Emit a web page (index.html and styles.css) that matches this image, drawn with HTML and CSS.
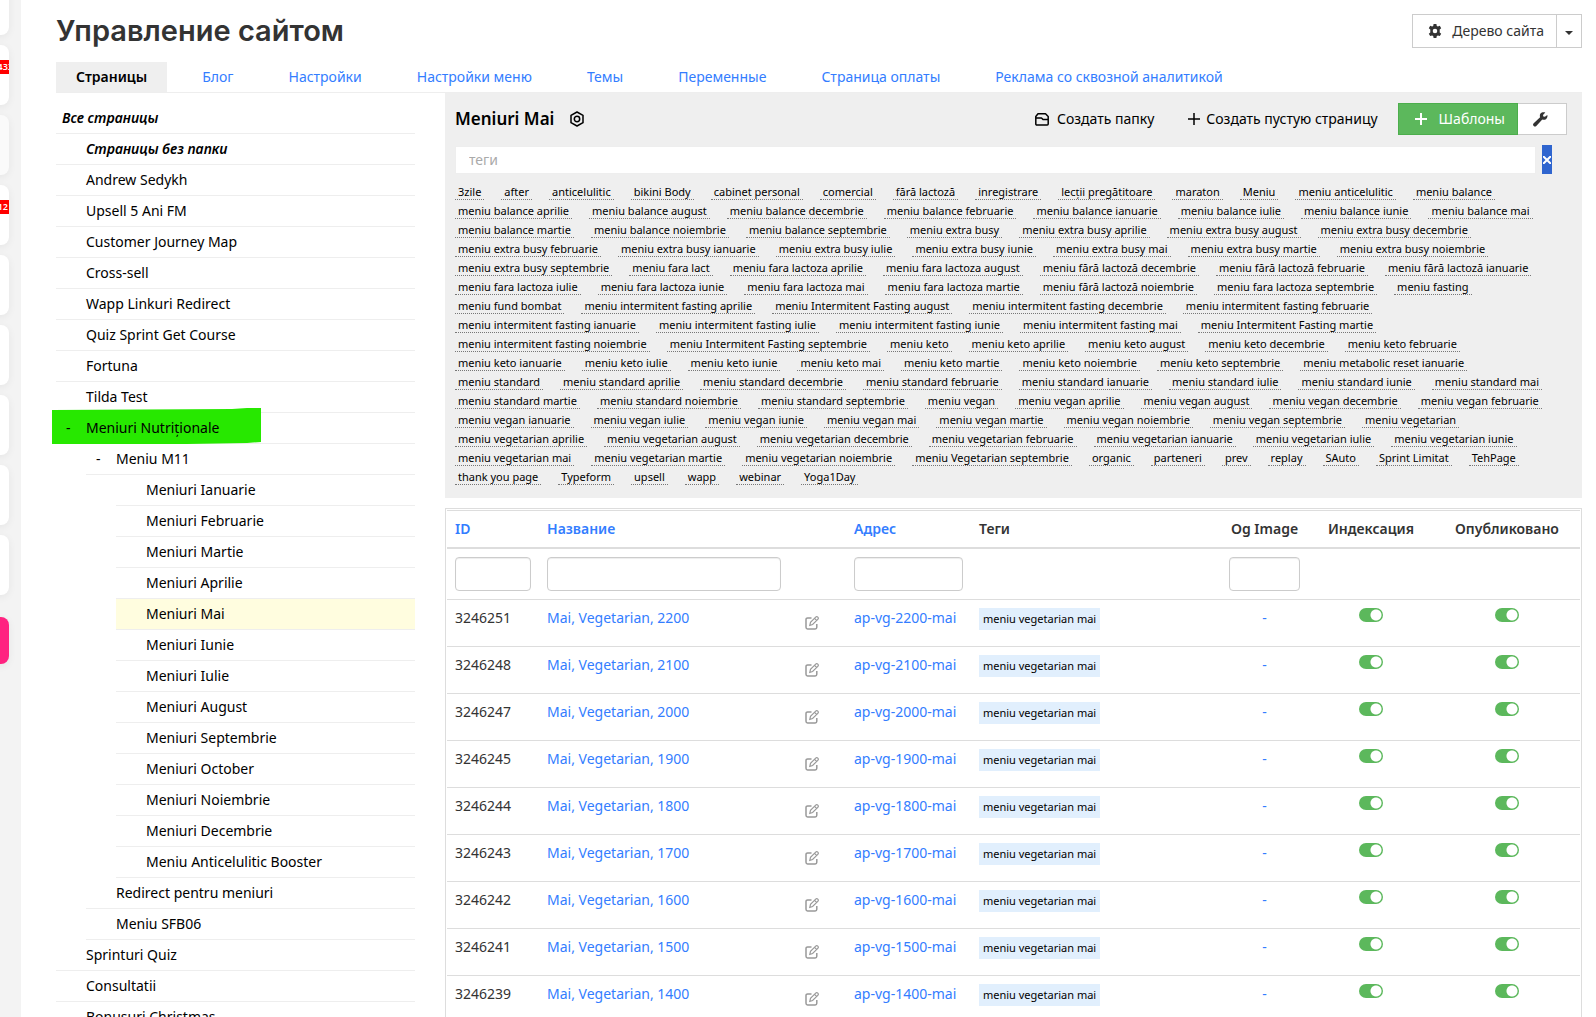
FILE: index.html
```html
<!DOCTYPE html>
<html lang="ru">
<head>
  <meta charset="UTF-8">
  <meta name="viewport" content="width=device-width, initial-scale=1.0">
  <title>Управление сайтом</title>
  <link rel="stylesheet" href="styles.css">
</head>
<body>

<!-- icons -->
<svg class="sprite" aria-hidden="true">
  <symbol id="i-edit" viewBox="0 0 14 14">
    <path d="M6.5 1.9H2.6A1.6 1.6 0 0 0 1 3.500v7.800a1.600 1.600 0 0 0 1.600 1.600h7.600a1.600 1.600 0 0 0 1.600-1.600V8" fill="none" stroke="currentColor" stroke-width="1.500"/>
    <path d="M4.800 9.300l.7-2.900 5.200-5.200a1.400 1.400 0 0 1 2.100 2.100L7.600 8.500z M9.600 2.400l2 2" fill="none" stroke="currentColor" stroke-width="1.200"/>
  </symbol>
  <symbol id="i-plus" viewBox="0 0 12 12">
    <path d="M6 0v12M0 6h12" fill="none" stroke="currentColor" stroke-width="1.500"/>
  </symbol>
</svg>

<div class="page">

  <nav class="rail" aria-label="Меню">
    <a class="rail-item" href="#"></a>
    <a class="rail-item" href="#"><span class="badge">433</span></a>
    <a class="rail-item faded" href="#"></a>
    <a class="rail-item" href="#"><span class="badge badge-short">12</span></a>
    <a class="rail-item" href="#"></a>
    <a class="rail-item" href="#"></a>
    <a class="rail-item" href="#"></a>
    <a class="rail-item" href="#"></a>
    <a class="rail-item" href="#"></a>
    <a class="rail-item pink" href="#"></a>
  </nav>

  <div class="content">

    <header class="page-header">
      <h1>Управление сайтом</h1>
      <div class="btn-group">
        <button class="btn btn-tree" type="button">
          <svg width="14" height="14" viewBox="0 0 14 14"><path fill="currentColor" fill-rule="evenodd" d="M5.600 0h2.800l.4 1.900 1.100.6 1.900-.7 1.400 2.400-1.500 1.300v2.900l1.500 1.300-1.400 2.400-1.900-.7-1.100.7L8.400 14H5.600l-.4-2-1.100-.6-1.900.7L.8 9.700l1.500-1.300V5.600L.8 4.200l1.400-2.400 1.900.7 1.100-.6zM7 4.700a2.300 2.300 0 1 0 0 4.600 2.300 2.300 0 0 0 0-4.600z"/></svg>
          Дерево сайта
        </button>
        <button class="btn btn-caret" type="button" aria-label="Ещё"><span class="caret"></span></button>
      </div>
    </header>

    <nav class="tabs">
      <a class="tab active" href="#">Страницы</a>
      <a class="tab" href="#">Блог</a>
      <a class="tab" href="#">Настройки</a>
      <a class="tab" href="#">Настройки меню</a>
      <a class="tab" href="#">Темы</a>
      <a class="tab" href="#">Переменные</a>
      <a class="tab" href="#">Страница оплаты</a>
      <a class="tab" href="#">Реклама со сквозной аналитикой</a>
    </nav>

    <div class="columns">

      <ul class="tree">
        <li class="root"><a href="#">Все страницы</a></li>
        <li class="bold"><a href="#">Страницы без папки</a></li>
        <li><a href="#">Andrew Sedykh</a></li>
        <li><a href="#">Upsell 5 Ani FM</a></li>
        <li><a href="#">Customer Journey Map</a></li>
        <li><a href="#">Cross-sell</a></li>
        <li><a href="#">Wapp Linkuri Redirect</a></li>
        <li><a href="#">Quiz Sprint Get Course</a></li>
        <li><a href="#">Fortuna</a></li>
        <li><a href="#">Tilda Test</a></li>
        <li class="marked">
          <svg class="marker" viewBox="0 0 209 36" preserveAspectRatio="none" aria-hidden="true"><path fill="#27e800" d="M0 2l180-1 15-1h14v34l-14 1-60 1H0z"/></svg>
          <span class="fold">-</span><a href="#">Meniuri Nutriționale</a>
        </li>
        <li class="level-2"><span class="fold">-</span><a href="#">Meniu M11</a></li>
        <li class="level-3"><a href="#">Meniuri Ianuarie</a></li>
        <li class="level-3"><a href="#">Meniuri Februarie</a></li>
        <li class="level-3"><a href="#">Meniuri Martie</a></li>
        <li class="level-3"><a href="#">Meniuri Aprilie</a></li>
        <li class="level-3 current"><a href="#">Meniuri Mai</a></li>
        <li class="level-3"><a href="#">Meniuri Iunie</a></li>
        <li class="level-3"><a href="#">Meniuri Iulie</a></li>
        <li class="level-3"><a href="#">Meniuri August</a></li>
        <li class="level-3"><a href="#">Meniuri Septembrie</a></li>
        <li class="level-3"><a href="#">Meniuri October</a></li>
        <li class="level-3"><a href="#">Meniuri Noiembrie</a></li>
        <li class="level-3"><a href="#">Meniuri Decembrie</a></li>
        <li class="level-3"><a href="#">Meniu Anticelulitic Booster</a></li>
        <li class="level-2"><a href="#">Redirect pentru meniuri</a></li>
        <li class="level-2"><a href="#">Meniu SFB06</a></li>
        <li><a href="#">Sprinturi Quiz</a></li>
        <li><a href="#">Consultatii</a></li>
        <li><a href="#">Bonusuri Christmas</a></li>
      </ul>

      <main class="main">

        <section class="panel">
          <div class="panel-head">
            <h2>Meniuri Mai</h2>
            <a class="settings" href="#" aria-label="Настройки папки">
              <svg width="16" height="16" viewBox="0 0 16 16" fill="none" stroke="currentColor" stroke-width="1.500"><path d="M8 1l6 3.300v7.400L8 15l-6-3.300V4.300z" stroke-linejoin="round"/><circle cx="8" cy="8" r="2.700"/></svg>
            </a>
            <a class="action action-folder" href="#">
              <svg width="14" height="13" viewBox="0 0 14 13" fill="none" stroke="currentColor" stroke-width="1.500" stroke-linejoin="round"><path d="M.8 5.500V11a1 1 0 0 0 1 1h10.400a1 1 0 0 0 1-1V6.500H8L6.500 5H.8zM.8 5.500V3.500L3 .8h7.500l2.700 2.700v3"/></svg>
              Создать папку
            </a>
            <a class="action" href="#">
              <svg width="12" height="12"><use href="#i-plus"/></svg>
              Создать пустую страницу
            </a>
            <div class="btn-group">
              <button class="btn btn-green" type="button">
                <svg width="12" height="12" viewBox="0 0 12 12"><path d="M6 0v12M0 6h12" stroke="currentColor" stroke-width="2"/></svg>
                Шаблоны
              </button>
              <button class="btn btn-wrench" type="button" aria-label="Инструменты">
                <svg width="15" height="15" viewBox="0 0 15 15"><path fill="currentColor" d="M14.300 2.900L11.900 4.800 10.300 4.400 10 2.900 12.300.6C10.700-.1 8.600.2 7.500 1.600 6.700 2.700 6.700 4 7.100 5.200L.7 11.300a1.800 1.800 0 0 0 0 2.600 1.800 1.800 0 0 0 2.600 0L9.300 7.600c1.300.5 2.800.3 3.900-.7 1.200-1.100 1.500-2.700 1.100-4z"/></svg>
              </button>
            </div>
          </div>

          <div class="tag-search">
            <input type="text" placeholder="теги" aria-label="теги">
            <button type="button" aria-label="Очистить"><svg width="8" height="8" viewBox="0 0 8 8"><path d="M0 0l8 8M8 0L0 8" stroke="currentColor" stroke-width="2"/></svg></button>
          </div>

          <div class="tags">
            <a href="#">3zile</a>
            <a href="#">after</a>
            <a href="#">anticelulitic</a>
            <a href="#">bikini Body</a>
            <a href="#">cabinet personal</a>
            <a href="#">comercial</a>
            <a href="#">fără lactoză</a>
            <a href="#">inregistrare</a>
            <a href="#">lecții pregătitoare</a>
            <a href="#">maraton</a>
            <a href="#">Meniu</a>
            <a href="#">meniu anticelulitic</a>
            <a href="#">meniu balance</a>
            <a href="#">meniu balance aprilie</a>
            <a href="#">meniu balance august</a>
            <a href="#">meniu balance decembrie</a>
            <a href="#">meniu balance februarie</a>
            <a href="#">meniu balance ianuarie</a>
            <a href="#">meniu balance iulie</a>
            <a href="#">meniu balance iunie</a>
            <a href="#">meniu balance mai</a>
            <a href="#">meniu balance martie</a>
            <a href="#">meniu balance noiembrie</a>
            <a href="#">meniu balance septembrie</a>
            <a href="#">meniu extra busy</a>
            <a href="#">meniu extra busy aprilie</a>
            <a href="#">meniu extra busy august</a>
            <a href="#">meniu extra busy decembrie</a>
            <a href="#">meniu extra busy februarie</a>
            <a href="#">meniu extra busy ianuarie</a>
            <a href="#">meniu extra busy iulie</a>
            <a href="#">meniu extra busy iunie</a>
            <a href="#">meniu extra busy mai</a>
            <a href="#">meniu extra busy martie</a>
            <a href="#">meniu extra busy noiembrie</a>
            <a href="#">meniu extra busy septembrie</a>
            <a href="#">meniu fara lact</a>
            <a href="#">meniu fara lactoza aprilie</a>
            <a href="#">meniu fara lactoza august</a>
            <a href="#">meniu fără lactoză decembrie</a>
            <a href="#">meniu fără lactoză februarie</a>
            <a href="#">meniu fără lactoză ianuarie</a>
            <a href="#">meniu fara lactoza iulie</a>
            <a href="#">meniu fara lactoza iunie</a>
            <a href="#">meniu fara lactoza mai</a>
            <a href="#">meniu fara lactoza martie</a>
            <a href="#">meniu fără lactoză noiembrie</a>
            <a href="#">meniu fara lactoza septembrie</a>
            <a href="#">meniu fasting</a>
            <a href="#">meniu fund bombat</a>
            <a href="#">meniu intermitent fasting aprilie</a>
            <a href="#">meniu Intermitent Fasting august</a>
            <a href="#">meniu intermitent fasting decembrie</a>
            <a href="#">meniu intermitent fasting februarie</a>
            <a href="#">meniu intermitent fasting ianuarie</a>
            <a href="#">meniu intermitent fasting iulie</a>
            <a href="#">meniu intermitent fasting iunie</a>
            <a href="#">meniu intermitent fasting mai</a>
            <a href="#">meniu Intermitent Fasting martie</a>
            <a href="#">meniu intermitent fasting noiembrie</a>
            <a href="#">meniu Intermitent Fasting septembrie</a>
            <a href="#">meniu keto</a>
            <a href="#">meniu keto aprilie</a>
            <a href="#">meniu keto august</a>
            <a href="#">meniu keto decembrie</a>
            <a href="#">meniu keto februarie</a>
            <a href="#">meniu keto ianuarie</a>
            <a href="#">meniu keto iulie</a>
            <a href="#">meniu keto iunie</a>
            <a href="#">meniu keto mai</a>
            <a href="#">meniu keto martie</a>
            <a href="#">meniu keto noiembrie</a>
            <a href="#">meniu keto septembrie</a>
            <a href="#">meniu metabolic reset ianuarie</a>
            <a href="#">meniu standard</a>
            <a href="#">meniu standard aprilie</a>
            <a href="#">meniu standard decembrie</a>
            <a href="#">meniu standard februarie</a>
            <a href="#">meniu standard ianuarie</a>
            <a href="#">meniu standard iulie</a>
            <a href="#">meniu standard iunie</a>
            <a href="#">meniu standard mai</a>
            <a href="#">meniu standard martie</a>
            <a href="#">meniu standard noiembrie</a>
            <a href="#">meniu standard septembrie</a>
            <a href="#">meniu vegan</a>
            <a href="#">meniu vegan aprilie</a>
            <a href="#">meniu vegan august</a>
            <a href="#">meniu vegan decembrie</a>
            <a href="#">meniu vegan februarie</a>
            <a href="#">meniu vegan ianuarie</a>
            <a href="#">meniu vegan iulie</a>
            <a href="#">meniu vegan iunie</a>
            <a href="#">meniu vegan mai</a>
            <a href="#">meniu vegan martie</a>
            <a href="#">meniu vegan noiembrie</a>
            <a href="#">meniu vegan septembrie</a>
            <a href="#">meniu vegetarian</a>
            <a href="#">meniu vegetarian aprilie</a>
            <a href="#">meniu vegetarian august</a>
            <a href="#">meniu vegetarian decembrie</a>
            <a href="#">meniu vegetarian februarie</a>
            <a href="#">meniu vegetarian ianuarie</a>
            <a href="#">meniu vegetarian iulie</a>
            <a href="#">meniu vegetarian iunie</a>
            <a href="#">meniu vegetarian mai</a>
            <a href="#">meniu vegetarian martie</a>
            <a href="#">meniu vegetarian noiembrie</a>
            <a href="#">meniu Vegetarian septembrie</a>
            <a href="#">organic</a>
            <a href="#">parteneri</a>
            <a href="#">prev</a>
            <a href="#">replay</a>
            <a href="#">SAuto</a>
            <a href="#">Sprint Limitat</a>
            <a href="#">TehPage</a>
            <a href="#">thank you page</a>
            <a href="#">Typeform</a>
            <a href="#">upsell</a>
            <a href="#">wapp</a>
            <a href="#">webinar</a>
            <a href="#">Yoga1Day</a>
          </div>
        </section>

        <div class="grid">
          <table>
            <colgroup>
              <col class="col-id"><col class="col-name"><col class="col-edit"><col class="col-url"><col><col class="col-og"><col class="col-index"><col class="col-pub">
            </colgroup>
            <thead>
              <tr>
                <th><a href="#">ID</a></th>
                <th><a href="#">Название</a></th>
                <th></th>
                <th><a href="#">Адрес</a></th>
                <th>Теги</th>
                <th class="center">Og Image</th>
                <th class="center">Индексация</th>
                <th class="center">Опубликовано</th>
              </tr>
              <tr class="filters">
                <td><input type="text" aria-label="ID"></td>
                <td><input type="text" aria-label="Название"></td>
                <td></td>
                <td><input type="text" aria-label="Адрес"></td>
                <td></td>
                <td><input type="text" aria-label="Og Image"></td>
                <td></td>
                <td></td>
              </tr>
            </thead>
            <tbody>
              <tr>
                <td>3246251</td>
                <td><a href="#">Mai, Vegetarian, 2200</a></td>
                <td><a class="edit" href="#" aria-label="Изменить"><svg width="14" height="14"><use href="#i-edit"/></svg></a></td>
                <td><a href="#">ap-vg-2200-mai</a></td>
                <td><span class="chip">meniu vegetarian mai</span></td>
                <td class="center"><a href="#">-</a></td>
                <td class="center"><input class="toggle" type="checkbox" aria-label="Индексация" checked></td>
                <td class="center"><input class="toggle" type="checkbox" aria-label="Опубликовано" checked></td>
              </tr>
              <tr>
                <td>3246248</td>
                <td><a href="#">Mai, Vegetarian, 2100</a></td>
                <td><a class="edit" href="#" aria-label="Изменить"><svg width="14" height="14"><use href="#i-edit"/></svg></a></td>
                <td><a href="#">ap-vg-2100-mai</a></td>
                <td><span class="chip">meniu vegetarian mai</span></td>
                <td class="center"><a href="#">-</a></td>
                <td class="center"><input class="toggle" type="checkbox" aria-label="Индексация" checked></td>
                <td class="center"><input class="toggle" type="checkbox" aria-label="Опубликовано" checked></td>
              </tr>
              <tr>
                <td>3246247</td>
                <td><a href="#">Mai, Vegetarian, 2000</a></td>
                <td><a class="edit" href="#" aria-label="Изменить"><svg width="14" height="14"><use href="#i-edit"/></svg></a></td>
                <td><a href="#">ap-vg-2000-mai</a></td>
                <td><span class="chip">meniu vegetarian mai</span></td>
                <td class="center"><a href="#">-</a></td>
                <td class="center"><input class="toggle" type="checkbox" aria-label="Индексация" checked></td>
                <td class="center"><input class="toggle" type="checkbox" aria-label="Опубликовано" checked></td>
              </tr>
              <tr>
                <td>3246245</td>
                <td><a href="#">Mai, Vegetarian, 1900</a></td>
                <td><a class="edit" href="#" aria-label="Изменить"><svg width="14" height="14"><use href="#i-edit"/></svg></a></td>
                <td><a href="#">ap-vg-1900-mai</a></td>
                <td><span class="chip">meniu vegetarian mai</span></td>
                <td class="center"><a href="#">-</a></td>
                <td class="center"><input class="toggle" type="checkbox" aria-label="Индексация" checked></td>
                <td class="center"><input class="toggle" type="checkbox" aria-label="Опубликовано" checked></td>
              </tr>
              <tr>
                <td>3246244</td>
                <td><a href="#">Mai, Vegetarian, 1800</a></td>
                <td><a class="edit" href="#" aria-label="Изменить"><svg width="14" height="14"><use href="#i-edit"/></svg></a></td>
                <td><a href="#">ap-vg-1800-mai</a></td>
                <td><span class="chip">meniu vegetarian mai</span></td>
                <td class="center"><a href="#">-</a></td>
                <td class="center"><input class="toggle" type="checkbox" aria-label="Индексация" checked></td>
                <td class="center"><input class="toggle" type="checkbox" aria-label="Опубликовано" checked></td>
              </tr>
              <tr>
                <td>3246243</td>
                <td><a href="#">Mai, Vegetarian, 1700</a></td>
                <td><a class="edit" href="#" aria-label="Изменить"><svg width="14" height="14"><use href="#i-edit"/></svg></a></td>
                <td><a href="#">ap-vg-1700-mai</a></td>
                <td><span class="chip">meniu vegetarian mai</span></td>
                <td class="center"><a href="#">-</a></td>
                <td class="center"><input class="toggle" type="checkbox" aria-label="Индексация" checked></td>
                <td class="center"><input class="toggle" type="checkbox" aria-label="Опубликовано" checked></td>
              </tr>
              <tr>
                <td>3246242</td>
                <td><a href="#">Mai, Vegetarian, 1600</a></td>
                <td><a class="edit" href="#" aria-label="Изменить"><svg width="14" height="14"><use href="#i-edit"/></svg></a></td>
                <td><a href="#">ap-vg-1600-mai</a></td>
                <td><span class="chip">meniu vegetarian mai</span></td>
                <td class="center"><a href="#">-</a></td>
                <td class="center"><input class="toggle" type="checkbox" aria-label="Индексация" checked></td>
                <td class="center"><input class="toggle" type="checkbox" aria-label="Опубликовано" checked></td>
              </tr>
              <tr>
                <td>3246241</td>
                <td><a href="#">Mai, Vegetarian, 1500</a></td>
                <td><a class="edit" href="#" aria-label="Изменить"><svg width="14" height="14"><use href="#i-edit"/></svg></a></td>
                <td><a href="#">ap-vg-1500-mai</a></td>
                <td><span class="chip">meniu vegetarian mai</span></td>
                <td class="center"><a href="#">-</a></td>
                <td class="center"><input class="toggle" type="checkbox" aria-label="Индексация" checked></td>
                <td class="center"><input class="toggle" type="checkbox" aria-label="Опубликовано" checked></td>
              </tr>
              <tr>
                <td>3246239</td>
                <td><a href="#">Mai, Vegetarian, 1400</a></td>
                <td><a class="edit" href="#" aria-label="Изменить"><svg width="14" height="14"><use href="#i-edit"/></svg></a></td>
                <td><a href="#">ap-vg-1400-mai</a></td>
                <td><span class="chip">meniu vegetarian mai</span></td>
                <td class="center"><a href="#">-</a></td>
                <td class="center"><input class="toggle" type="checkbox" aria-label="Индексация" checked></td>
                <td class="center"><input class="toggle" type="checkbox" aria-label="Опубликовано" checked></td>
              </tr>
            </tbody>
          </table>
        </div>

      </main>
    </div>
  </div>
</div>

</body>
</html>
```
FILE: styles.css
```css
* {
  box-sizing: border-box;
}

body {
  margin: 0;
  font-family: "Noto Sans", "Open Sans", sans-serif;
  font-size: 14px;
  line-height: 20px;
  color: #333;
  background: #fff;
}

a {
  color: #337dff;
  text-decoration: none;
}

button,
input {
  font: inherit;
  color: inherit;
}

button {
  cursor: pointer;
}

svg {
  flex: none;
}

.sprite {
  display: none;
}

.page {
  display: flex;
  height: 100vh;
  overflow: hidden;
}

/* Left rail */
.rail {
  flex: none;
  display: flex;
  flex-direction: column;
  gap: 10px;
  width: 21px;
  background: #f3f3f3;
  overflow: hidden;
}

.rail-item {
  flex: none;
  display: flex;
  justify-content: flex-end;
  align-items: flex-start;
  width: 60px;
  height: 60px;
  margin-left: -51px;
  padding-top: 15px;
  border-radius: 8px;
  background: #fff;
  box-shadow: 0 2px 8px rgba(0, 0, 0, 0.06);
  overflow: hidden;
}

.rail-item:first-child {
  margin-top: -25px;
}

.rail-item.faded {
  background: #fafafa;
}

.rail-item.pink {
  height: 47px;
  margin-top: 12px;
  background: #ff2380;
}

.badge {
  margin-right: -5px;
  padding: 0 1px;
  font-size: 9px;
  font-weight: 600;
  line-height: 14px;
  color: #fff;
  background: #f00;
}

.badge-short {
  margin-right: 0;
}

/* Header */
.content {
  flex: 1;
  min-width: 0;
  padding: 0 14px 0 35px;
}

.page-header {
  display: flex;
  justify-content: space-between;
  align-items: center;
  height: 62px;
}

h1 {
  margin: 0;
  font-family: Inter, "Noto Sans", sans-serif;
  font-size: 29px;
  font-weight: 600;
  line-height: 40px;
}

.btn-group {
  display: flex;
}

.btn {
  display: flex;
  align-items: center;
  height: 34px;
  border: 1px solid #ccc;
  background: #fff;
}

.btn-tree {
  gap: 10px;
  padding: 0 12px 0 15px;
}

.btn-caret {
  justify-content: center;
  width: 26px;
  margin-left: -1px;
  padding: 4px 0 0;
}

.caret {
  border-top: 4px solid #333;
  border-left: 4px solid transparent;
  border-right: 4px solid transparent;
}

/* Tabs */
.tabs {
  display: flex;
  gap: 15px;
  border-bottom: 1px solid #eee;
}

.tab {
  padding: 5px 20px;
}

.tab.active {
  font-weight: 600;
  color: #000;
  background: #efefef;
}

.columns {
  display: flex;
  gap: 30px;
}

/* Pages tree */
.tree {
  flex: none;
  width: 359px;
  margin: 0;
  padding: 10px 0 0;
  list-style: none;
}

.tree li {
  display: flex;
  position: relative;
  height: 31px;
  padding: 5px 0 5px 30px;
  border-bottom: 1px solid #eee;
}

.tree a {
  position: relative;
  color: #000;
}

.tree .root {
  padding-left: 6px;
}

.tree .root a,
.tree .bold a {
  font-weight: 600;
  font-style: italic;
}

.tree .level-2 {
  margin-left: 30px;
}

.tree .level-3 {
  margin-left: 60px;
}

.tree .current {
  background: #fffddf;
}

.fold {
  position: relative;
  width: 20px;
  margin-left: -20px;
  color: #000;
}

.marker {
  position: absolute;
  top: -5px;
  left: -4px;
  width: 209px;
  height: 36px;
}

/* Tags panel */
.main {
  flex: 1;
  min-width: 0;
}

.panel {
  padding: 10px 15px 13px 10px;
  background: #efefef;
}

.panel-head {
  display: flex;
  align-items: center;
}

.panel-head .btn {
  height: 32px;
}

h2 {
  margin: 0;
  font-size: 17px;
  font-weight: 600;
  line-height: 24px;
  color: #000;
}

.settings {
  display: flex;
  margin-left: 15px;
  color: #000;
}

.action {
  display: flex;
  align-items: center;
  gap: 6px;
  margin-left: 34px;
  color: #000;
}

.action-folder {
  gap: 8px;
  margin-left: auto;
}

.panel-head .btn-group {
  margin-left: 20px;
}

.btn-green {
  gap: 12px;
  padding: 0 12px 0 16px;
  color: #fff;
  border-color: #4cae4c;
  background: #5cb85c;
}

.btn-wrench {
  justify-content: center;
  width: 49px;
  padding: 0 4px 0 0;
  border-left: 0;
}

.tag-search {
  display: flex;
  align-items: center;
  gap: 6px;
  margin: 10px 15px 10px 0;
}

.tag-search input {
  flex: 1;
  height: 28px;
  padding: 0 13px;
  border: 1px solid #eee;
  background: #fff;
}

.tag-search input::placeholder {
  color: #aaa;
}

.tag-search button {
  display: flex;
  align-items: center;
  justify-content: center;
  width: 10px;
  height: 29px;
  padding: 0;
  border: 0;
  color: #fff;
  background: #2f65cf;
}

.tags {
  display: flex;
  flex-wrap: wrap;
  gap: 3px 17px;
  padding-right: 15px;
}

.tags a {
  padding: 0 3px;
  font-size: 11px;
  line-height: 15px;
  color: #000;
  border-bottom: 1px dotted #777;
}

/* Pages table */
.grid {
  margin-top: 10px;
  padding: 1px;
  border: 1px solid #ddd;
}

table {
  width: 100%;
  table-layout: fixed;
  border-spacing: 0;
  border-top: 1px solid #ddd;
}

.col-id { width: 92px; }
.col-name { width: 250px; }
.col-edit { width: 57px; }
.col-url { width: 125px; }
.col-og { width: 87px; }
.col-index { width: 126px; }
.col-pub { width: 146px; }

th,
td {
  padding: 8px;
  text-align: left;
  vertical-align: top;
  white-space: nowrap;
}

th {
  font-weight: 600;
  border-bottom: 2px solid #ddd;
}

td {
  border-bottom: 1px solid #ddd;
}

tbody td {
  height: 47px;
}

.center {
  text-align: center;
}

.filters input {
  display: block;
  width: 100%;
  height: 34px;
  padding: 6px;
  border: 1px solid #ccc;
  border-radius: 4px;
  background: #fff;
  box-shadow: inset 0 1px 1px rgba(0, 0, 0, 0.075);
}

.edit {
  display: block;
  padding: 8px 0 0 8px;
  line-height: 0;
  color: #999;
}

.chip {
  display: inline-block;
  padding: 1px 4px;
  font-size: 11px;
  line-height: 20px;
  color: #000;
  background: #e1effd;
}

.toggle {
  display: block;
  appearance: none;
  width: 24px;
  height: 14px;
  margin: 0 auto;
  border-radius: 7px;
  background: radial-gradient(circle at 17px 7px, #fff 5px, #5cb85c 6px);
}
```
